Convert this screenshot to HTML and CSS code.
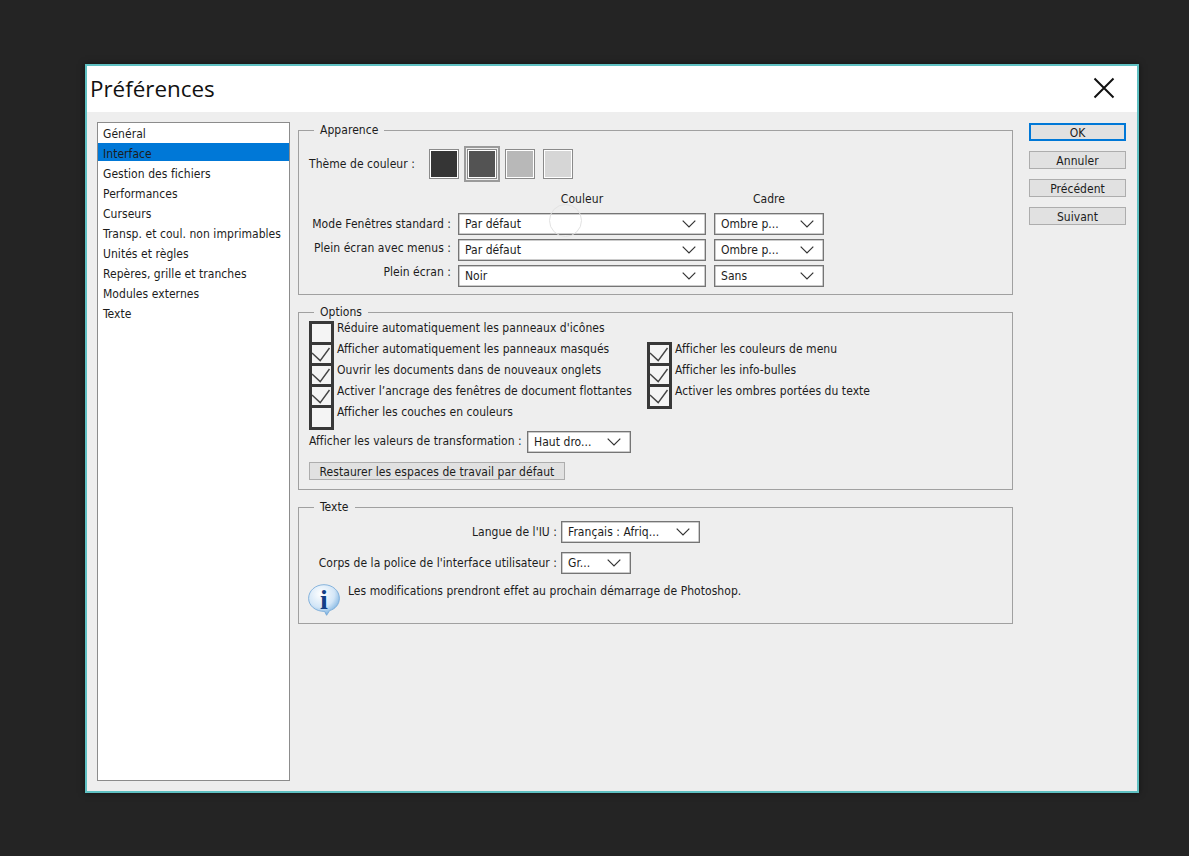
FILE: index.html
```html
<!DOCTYPE html>
<html lang="fr">
<head>
  <meta charset="UTF-8" />
  <title>Préférences</title>
  <link rel="stylesheet" href="styles.css">
</head>
<body>
  <svg class="defs" width="0" height="0">
    <symbol id="chevron" viewBox="0 0 14 8">
      <path d="M0.7 0.7 L7 7 L13.3 0.7" fill="none" stroke="#333" stroke-width="1.2"/>
    </symbol>
    <symbol id="check" viewBox="0 0 25 25">
      <path d="M3 11 L11.2 18.6 L20.5 6" fill="none" stroke="#444" stroke-width="1.4"/>
    </symbol>
  </svg>

  <div class="dialog">
    <header class="title-bar">
      <h1>Préférences</h1>
      <svg class="close" width="22" height="22" viewBox="0 0 22 22">
        <path d="M1.5 1.5 L20.5 20.5 M20.5 1.5 L1.5 20.5" stroke="#111" stroke-width="2"/>
      </svg>
    </header>

    <div class="content">
      <ul class="side-list">
        <li>Général</li>
        <li class="selected">Interface</li>
        <li>Gestion des fichiers</li>
        <li>Performances</li>
        <li>Curseurs</li>
        <li>Transp. et coul. non imprimables</li>
        <li>Unités et règles</li>
        <li>Repères, grille et tranches</li>
        <li>Modules externes</li>
        <li>Texte</li>
      </ul>

      <div class="panels">
        <fieldset class="group appearance">
          <legend>Apparence</legend>
          <div class="theme-row">
            <span class="theme-label">Thème de couleur :</span>
            <span class="swatch dark"></span>
            <span class="swatch-ring"><span class="swatch medium"></span></span>
            <span class="swatch light"></span>
            <span class="swatch lighter"></span>
          </div>
          <div class="mode-grid">
            <span></span>
            <span class="col-head">Couleur</span>
            <span class="col-head">Cadre</span>

            <span class="mode-label">Mode Fenêtres standard :</span>
            <div class="combo"><span>Par défaut</span><svg class="chev"><use href="#chevron"/></svg></div>
            <div class="combo"><span>Ombre p...</span><svg class="chev"><use href="#chevron"/></svg></div>

            <span class="mode-label up-2">Plein écran avec menus :</span>
            <div class="combo"><span>Par défaut</span><svg class="chev"><use href="#chevron"/></svg></div>
            <div class="combo"><span>Ombre p...</span><svg class="chev"><use href="#chevron"/></svg></div>

            <span class="mode-label up-4">Plein écran :</span>
            <div class="combo"><span>Noir</span><svg class="chev"><use href="#chevron"/></svg></div>
            <div class="combo"><span>Sans</span><svg class="chev"><use href="#chevron"/></svg></div>
          </div>
          <span class="cursor-ring"></span>
        </fieldset>

        <fieldset class="group options">
          <legend>Options</legend>
          <div class="check-cols">
            <div class="check-col first">
              <div class="check-row"><span class="box"></span><span>Réduire automatiquement les panneaux d'icônes</span></div>
              <div class="check-row"><span class="box"><svg><use href="#check"/></svg></span><span>Afficher automatiquement les panneaux masqués</span></div>
              <div class="check-row"><span class="box"><svg><use href="#check"/></svg></span><span>Ouvrir les documents dans de nouveaux onglets</span></div>
              <div class="check-row"><span class="box"><svg><use href="#check"/></svg></span><span>Activer l’ancrage des fenêtres de document flottantes</span></div>
              <div class="check-row"><span class="box"></span><span>Afficher les couches en couleurs</span></div>
            </div>
            <div class="check-col second">
              <div class="check-row"><span class="box"><svg><use href="#check"/></svg></span><span>Afficher les couleurs de menu</span></div>
              <div class="check-row"><span class="box"><svg><use href="#check"/></svg></span><span>Afficher les info-bulles</span></div>
              <div class="check-row"><span class="box"><svg><use href="#check"/></svg></span><span>Activer les ombres portées du texte</span></div>
            </div>
          </div>
          <div class="transform-row">
            <span class="transform-label">Afficher les valeurs de transformation :</span>
            <div class="combo small"><span>Haut dro...</span><svg class="chev"><use href="#chevron"/></svg></div>
          </div>
          <button class="btn restore">Restaurer les espaces de travail par défaut</button>
        </fieldset>

        <fieldset class="group text-group">
          <legend>Texte</legend>
          <div class="text-row">
            <span class="text-label">Langue de l'IU :</span>
            <div class="combo lang"><span>Français : Afriq...</span><svg class="chev"><use href="#chevron"/></svg></div>
          </div>
          <div class="text-row second">
            <span class="text-label">Corps de la police de l'interface utilisateur :</span>
            <div class="combo size"><span>Gr...</span><svg class="chev"><use href="#chevron"/></svg></div>
          </div>
          <div class="notice">
            <svg class="info" width="32" height="32" viewBox="0 0 32 32">
              <defs>
                <radialGradient id="bubble" cx="0.4" cy="0.3" r="0.8">
                  <stop offset="0" stop-color="#ffffff"/>
                  <stop offset="0.55" stop-color="#d3e6f7"/>
                  <stop offset="1" stop-color="#5d9fd8"/>
                </radialGradient>
              </defs>
              <path d="M16 0.7 C24.6 0.7 31.4 6.8 31.4 14.3 C31.4 20.4 27 25.2 21.6 26.6 L18.6 31.3 L16.6 27.4 C7.6 27.6 0.6 21.8 0.6 14.3 C0.6 6.8 7.4 0.7 16 0.7 Z" fill="url(#bubble)" stroke="#6ea5d6" stroke-width="0.8"/>
              <text x="16" y="25" text-anchor="middle" class="info-i">i</text>
            </svg>
            <span>Les modifications prendront effet au prochain démarrage de Photoshop.</span>
          </div>
        </fieldset>
      </div>

      <div class="actions">
        <button class="btn default">OK</button>
        <button class="btn">Annuler</button>
        <button class="btn">Précédent</button>
        <button class="btn">Suivant</button>
      </div>
    </div>
  </div>
</body>
</html>
```

FILE: styles.css
```css
body {
  margin: 0;
  padding: 64px 0 0 85px;
  height: 792px;
  overflow: hidden;
  background-color: #242424;
  font-family: "DejaVu Sans", "Noto Sans", sans-serif;
  font-stretch: condensed;
  font-size: 12px;
  letter-spacing: 0.05px;
  line-height: 15px;
  color: #1c1c1c;
}

.defs {
  position: absolute;
}

.dialog {
  width: 1050px;
  height: 725px;
  border: 2px solid #5fc0c2;
  background-color: #eeeeee;
  display: flex;
  flex-direction: column;
  box-shadow: 0 0 6px rgba(0, 0, 0, 0.5);
}

.title-bar {
  height: 46px;
  flex: none;
  background: #fff;
  display: flex;
  justify-content: space-between;
  align-items: center;
  padding: 0 22px 0 3px;
}

.title-bar h1 {
  margin: 0;
  font-family: "Open Sans", sans-serif;
  font-stretch: normal;
  font-size: 22.4px;
  font-weight: 400;
  letter-spacing: 0;
  line-height: 46px;
  color: #111;
}

.close {
  margin-bottom: 2px;
}

.content {
  flex: 1;
  display: flex;
  padding: 10px;
  gap: 8px;
}

/* left list */
.side-list {
  width: 191px;
  height: 657px;
  margin: 0;
  padding: 0;
  list-style: none;
  background: #fff;
  border: 1px solid #8c8c8c;
  flex: none;
}

.side-list li {
  height: 18px;
  line-height: 22px;
  margin-bottom: 2px;
  padding-left: 5px;
  white-space: nowrap;
}

.side-list li.selected {
  background-color: #0078d7;
}

/* middle panels */
.panels {
  width: 715px;
  flex: none;
  display: flex;
  flex-direction: column;
  gap: 9px;
}

.group {
  position: relative;
  margin: 0;
  min-width: 0;
  border: 1px solid #a0a0a0;
  padding: 0 0 0 10px;
}

.group legend {
  margin-left: 5px;
  padding: 0 6px;
  line-height: 16px;
}

.appearance {
  padding-top: 8px;
  padding-bottom: 7px;
}

.theme-row {
  display: flex;
  align-items: center;
  height: 36px;
}

.theme-label {
  width: 120px;
  flex: none;
}

.swatch {
  display: block;
  width: 30px;
  height: 30px;
  box-sizing: border-box;
  border: 1px solid #8a8a8a;
  outline: 1px solid #fff;
  outline-offset: -2px;
}

.swatch.dark { background: #353535; }
.swatch.medium { background: #535353; }
.swatch.light { background: #b8b8b8; margin-right: 8px; }
.swatch.lighter { background: #d6d6d6; }

.swatch-ring {
  display: block;
  padding: 1px;
  border: 2px solid #9a9a9a;
  margin: 0 5px;
}

.mode-grid {
  display: grid;
  grid-template-columns: 141px 248px 110px;
  grid-template-rows: 18px;
  grid-auto-rows: 22px;
  column-gap: 8px;
  row-gap: 4px;
  margin-top: 9px;
  align-items: center;
}

.col-head {
  text-align: center;
  line-height: 16px;
  height: 16px;
  align-self: start;
}

.mode-label {
  text-align: right;
  margin-right: -1px;
  white-space: nowrap;
}

.mode-label.up-2 { margin-bottom: 4px; }
.mode-label.up-4 { margin-bottom: 8px; }

.cursor-ring {
  position: absolute;
  left: 250px;
  top: 66px;
  width: 33px;
  height: 33px;
  box-sizing: border-box;
  border: 1px solid #e2e2e2;
  border-radius: 50%;
}

.combo {
  height: 22px;
  box-sizing: border-box;
  border: 1px solid #757575;
  box-shadow: inset 0 0 0 0.5px #9a9a9a;
  background: #fff;
  display: flex;
  justify-content: space-between;
  align-items: center;
  padding: 0 9px 0 6px;
  white-space: nowrap;
}

.combo span {
  margin-top: 1px;
}

.chev {
  width: 14px;
  height: 8px;
  flex: none;
}

/* options */
.options {
  padding-bottom: 9px;
}

.check-cols {
  display: flex;
}

.check-col.first {
  width: 338px;
}

.check-col.second {
  margin-top: 21px;
}

.check-row {
  display: flex;
  height: 21px;
  gap: 3px;
  line-height: 17px;
  white-space: nowrap;
}

.box {
  width: 25px;
  height: 25px;
  flex: none;
  box-sizing: border-box;
  border: 3px solid #383838;
  background: #f4f4f4;
  position: relative;
  margin-top: 1px;
}

.box svg {
  position: absolute;
  left: -3px;
  top: -3px;
  width: 25px;
  height: 25px;
}

.transform-row {
  display: flex;
  align-items: center;
  margin-top: 6px;
  height: 22px;
}

.transform-label {
  width: 218px;
  flex: none;
  white-space: nowrap;
  margin-bottom: 2px;
}

.combo.small {
  width: 104px;
}

.btn {
  display: block;
  box-sizing: border-box;
  font: inherit;
  letter-spacing: inherit;
  color: inherit;
  height: 18px;
  padding: 2px 0 0;
  background: #e1e1e1;
  border: 1px solid #adadad;
  line-height: 15px;
}

.btn.restore {
  width: 256px;
  margin-top: 9px;
}

/* texte */
.text-group {
  padding-top: 6px;
  padding-bottom: 7px;
}

.text-row {
  display: flex;
  align-items: center;
  gap: 4px;
}

.text-row.second {
  margin-top: 9px;
}

.text-label {
  width: 248px;
  flex: none;
  text-align: right;
  white-space: nowrap;
}

.combo.lang {
  width: 139px;
}

.combo.size {
  width: 70px;
}

.notice {
  display: flex;
  gap: 8px;
  margin-top: 10px;
  height: 32px;
  margin-left: -1px;
}

.info {
  flex: none;
}

.info-i {
  font-family: "Liberation Serif", serif;
  font-size: 28px;
  font-weight: 700;
  fill: #123f86;
}

/* buttons on the right */
.actions {
  width: 97px;
  margin-left: 8px;
  flex: none;
  display: flex;
  flex-direction: column;
  gap: 10px;
  padding-top: 1px;
}

.btn.default {
  border: 2px solid #0078d7;
  padding-top: 1px;
}
```
